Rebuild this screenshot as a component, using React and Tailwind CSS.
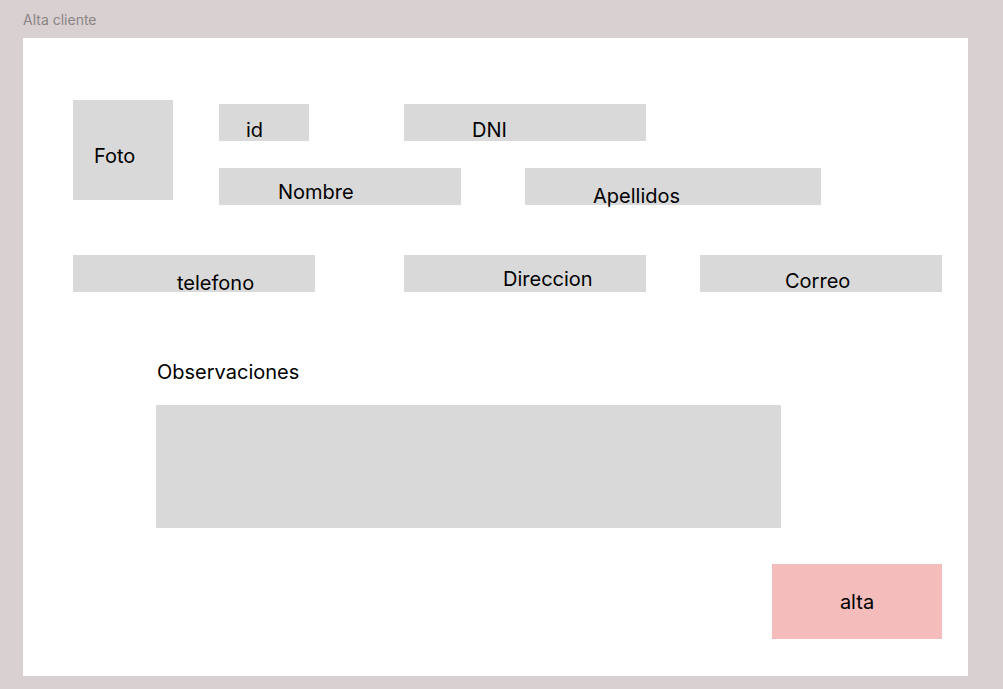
export default function App() {
  const box = "bg-[#d9d9d9] h-[37px] text-[20px] leading-6 text-black";

  return (
    <main className="min-h-[689px] bg-[#d9d0d1] pl-[23px] font-['Inter',sans-serif]">
      <p className="pt-[11px] pb-[10px] text-[14px] leading-[17px] text-[#8a8687]">Alta cliente</p>

      <div className="w-[945px] h-[638px] bg-white pl-[50px]">
        {/* foto + datos basicos */}
        <div className="flex items-start pt-[62px]">
          <div className="bg-[#d9d9d9] w-[100px] h-[100px] pl-[21px] pt-[44px] text-[20px] leading-6 text-black">
            Foto
          </div>
          <div className="ml-[46px] mt-[4px]">
            <div className="flex">
              <div className={`${box} w-[90px] pl-[27px] pt-[14px]`}>id</div>
              <div className={`${box} ml-[95px] w-[242px] pl-[68px] pt-[14px]`}>DNI</div>
            </div>
            <div className="flex mt-[27px]">
              <div className={`${box} w-[242px] pl-[59px] pt-[12px]`}>Nombre</div>
              <div className={`${box} ml-[64px] w-[296px] pl-[68px] pt-[16px]`}>Apellidos</div>
            </div>
          </div>
        </div>

        {/* contacto */}
        <div className="flex mt-[50px]">
          <div className={`${box} w-[242px] pl-[104px] pt-[16px]`}>telefono</div>
          <div className={`${box} ml-[89px] w-[242px] pl-[99px] pt-[12px]`}>Direccion</div>
          <div className={`${box} ml-[54px] w-[242px] pl-[85px] pt-[14px]`}>Correo</div>
        </div>

        <p className="mt-[68px] ml-[84px] text-[20px] leading-6 text-black">Observaciones</p>
        <div className="mt-[21px] ml-[83px] w-[625px] h-[123px] bg-[#d9d9d9]"></div>

        <button className="mt-[36px] ml-[699px] w-[170px] h-[75px] bg-[#f4bcbb] flex items-center justify-center text-[20px] leading-6 text-black">
          alta
        </button>
      </div>
    </main>
  );
}
